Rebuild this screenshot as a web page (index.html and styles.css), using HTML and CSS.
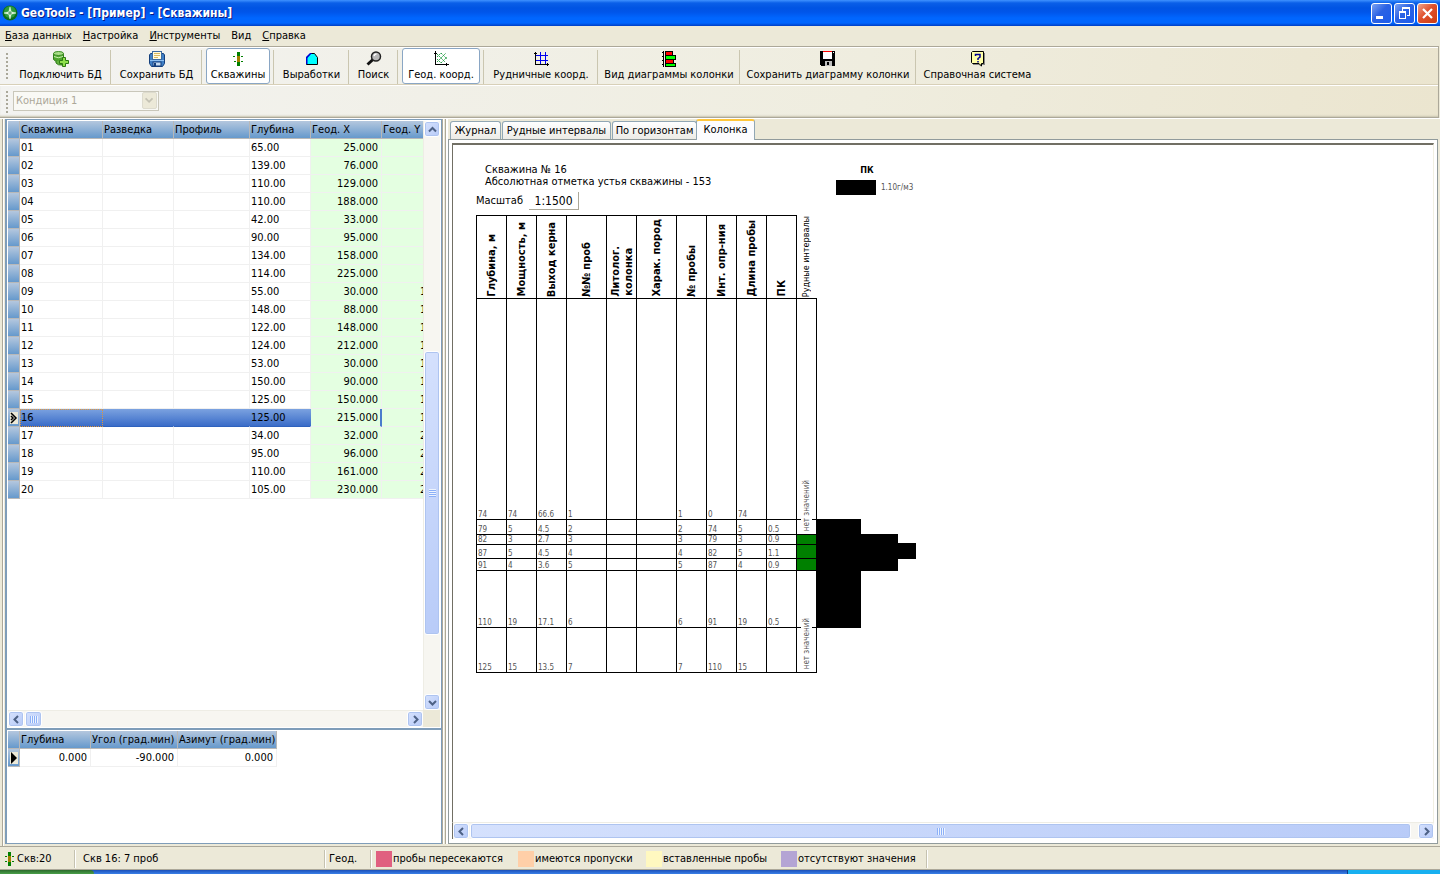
FILE: index.html
```
<!DOCTYPE html>
<html lang="ru">
<head>
    <meta charset="UTF-8">
    <meta name="viewport" content="width=device-width, initial-scale=1.0">
    <title>GeoTools - [Пример] - [Скважины]</title>
    <link rel="stylesheet" href="styles.css">
</head>
<body>
    <header class="titlebar">
        <svg class="logo" width="16" height="16" viewBox="0 0 16 16">
            <circle cx="8" cy="8" r="7.5" fill="#0b6b1c"/>
            <circle cx="8" cy="7" r="6" fill="#2c9a3c"/>
            <path d="M8 2L9.2 6.8L14 8L9.2 9.2L8 14L6.8 9.2L2 8L6.8 6.8Z" fill="#e8fbe8" stroke="#e8fbe8" stroke-width=".5"/>
            <path d="M8 6V10M6 8H10" stroke="#0b6b1c" stroke-width=".7"/>
        </svg>
        <h1>GeoTools - [Пример] - [Скважины]</h1>
        <div class="window-buttons">
            <button class="win-btn" aria-label="Свернуть">
                <svg width="19" height="19" viewBox="0 0 19 19" shape-rendering="crispEdges"><rect x="4" y="12" width="7" height="3" fill="#fff"/></svg>
            </button>
            <button class="win-btn" aria-label="Восстановить">
                <svg width="19" height="19" viewBox="0 0 19 19" shape-rendering="crispEdges" fill="none" stroke="#fff">
                    <path d="M4.5 8.5H10.5V14.500H4.5ZM4 7.5H11M7.5 7V4.5H14.5V11.5H12M7 3.5H15"/>
                </svg>
            </button>
            <button class="win-btn close" aria-label="Закрыть">
                <svg width="19" height="19" viewBox="0 0 19 19"><path d="M5 5L14 14M14 5L5 14" stroke="#fff" stroke-width="2.2"/></svg>
            </button>
        </div>
    </header>

    <nav class="menu">
        <button><u>Б</u>аза данных</button>
        <button><u>Н</u>астройка</button>
        <button><u>И</u>нструменты</button>
        <button>Вид</button>
        <button><u>С</u>правка</button>
    </nav>

    <div class="toolbars">
        <div class="toolbar">
            <div class="tool">
                <button>
                    <svg width="16" height="16" viewBox="0 0 16 16">
                        <path d="M.5 2.5V8.500Q2 10.500 5.500 10.500T10.500 8.500V2.500Z" fill="#4fa52e" stroke="#2f7d1a"/>
                        <path d="M1 5.500Q5 8 10 5.500" fill="none" stroke="#c8efae"/>
                        <ellipse cx="5.5" cy="2.5" rx="5" ry="2" fill="#a8dc88" stroke="#3a8d22"/>
                        <path d="M3 10V12Q5 14.500 9 14V9" fill="#62b33e" stroke="#2f7d1a"/>
                        <path d="M9.500 6.500H12.500V9.500H15.500V12.500H12.500V15.500H9.500V12.500H6.500V9.500H9.500Z" fill="#8fe04c" stroke="#2c7a12"/>
                    </svg>
                    <span>Подключить БД</span>
                </button>
            </div>
            <div class="tool">
                <button>
                    <svg width="16" height="16" viewBox="0 0 16 16">
                        <path d="M1.500 2.500H14.500L15.500 4V12.500L13.500 15.500H2.500L.5 12.500V4Z" fill="#3f7fc6" stroke="#143f7c"/>
                        <rect x="3.5" y=".5" width="9" height="8" fill="#fffbe0" stroke="#3c6aa0"/>
                        <path d="M5 2.500H11M5 4.500H11M5 6.500H9" stroke="#d9b860"/>
                        <path d="M1 9.500H15" stroke="#8fc0f0"/>
                        <rect x="4" y="11" width="8" height="4" fill="#c4daf0" stroke="#143f7c"/>
                        <rect x="5" y="12" width="2" height="3" fill="#143f7c"/>
                    </svg>
                    <span>Сохранить БД</span>
                </button>
            </div>
            <div class="tool">
                <button class="pressed">
                    <svg width="16" height="16" viewBox="0 0 16 16" shape-rendering="crispEdges">
                        <rect x="7" y="1" width="3" height="14" fill="#008000"/>
                        <rect x="7" y="5" width="3" height="6" fill="#a08000"/>
                        <path d="M3 5.500H5M11 5.500H13M4 10.500H6M11 10.500H13" stroke="#008000"/>
                    </svg>
                    <span>Скважины</span>
                </button>
            </div>
            <div class="tool">
                <button>
                    <svg width="16" height="16" viewBox="0 0 16 16">
                        <path d="M2.500 13.500V6.500L6.500 2.500H10.500L13.500 6.500V13.500Z" fill="#00ffff" stroke="#000"/>
                        <path d="M2 13V6L6 2H8L3.500 7V13Z" fill="#0000d0"/>
                    </svg>
                    <span>Выработки</span>
                </button>
            </div>
            <div class="tool">
                <button>
                    <svg width="16" height="16" viewBox="0 0 16 16">
                        <path d="M7 8.500L1.500 13.500" stroke="#111" stroke-width="3"/>
                        <circle cx="10" cy="5.5" r="4.5" fill="#b8b8b8" stroke="#222" stroke-width="1.5"/>
                        <path d="M8 5Q8.500 3 10.500 3" stroke="#fff" stroke-width="1.5" fill="none"/>
                    </svg>
                    <span>Поиск</span>
                </button>
            </div>
            <div class="tool">
                <button class="pressed">
                    <svg width="16" height="16" viewBox="0 0 16 16">
                        <path d="M2.500 0V13.500H16M1 2.500H4M13.500 12V15" stroke="#000" fill="none" shape-rendering="crispEdges"/>
                        <path d="M4 3L12 11M8 2L14 8M4 8L8 12M4 11L13 2M4 6L8 2M8 12L14 6" stroke="#2aa04a" stroke-dasharray="2 1"/>
                    </svg>
                    <span>Геод. коорд.</span>
                </button>
            </div>
            <div class="tool">
                <button>
                    <svg width="16" height="16" viewBox="0 0 16 16" shape-rendering="crispEdges">
                        <path d="M7.500 1V13M12.500 1V13M3 4.500H15M3 9.500H15" stroke="#0000f0"/>
                        <path d="M2.500 1V13.500H16M1 2.500H4M14.500 12V15" stroke="#000" fill="none"/>
                    </svg>
                    <span>Рудничные коорд.</span>
                </button>
            </div>
            <div class="tool">
                <button>
                    <svg width="16" height="16" viewBox="0 0 16 16" shape-rendering="crispEdges" stroke="#000">
                        <path d="M2.500 0V16M1 1.500H3M1 5.500H3M1 9.500H3M1 13.500H3"/>
                        <rect x="4.5" y=".5" width="7" height="4" fill="#f00"/>
                        <rect x="4.5" y="4.5" width="10" height="4" fill="#0f0"/>
                        <rect x="4.5" y="8.5" width="8" height="4" fill="#f00"/>
                        <rect x="4.5" y="12.5" width="10" height="3" fill="#0f0"/>
                    </svg>
                    <span>Вид диаграммы колонки</span>
                </button>
            </div>
            <div class="tool">
                <button>
                    <svg width="16" height="16" viewBox="0 0 16 16" shape-rendering="crispEdges">
                        <path d="M0 0H15V15H1L0 14Z" fill="#000"/>
                        <rect x="3" y="0" width="9" height="8" fill="#fff"/>
                        <rect x="3" y="0" width="9" height="1" fill="#f00"/>
                        <rect x="13" y="1" width="1" height="1" fill="#fff"/>
                        <rect x="5" y="10" width="7" height="5" fill="#c0c0c0"/>
                        <rect x="7" y="11" width="2" height="3" fill="#000"/>
                    </svg>
                    <span>Сохранить диаграмму колонки</span>
                </button>
            </div>
            <div class="tool">
                <button>
                    <svg width="16" height="16" viewBox="0 0 16 16">
                        <path d="M3 2H15V14H12V16L9 14H3Z" fill="#888"/>
                        <path d="M2.500 .5H13.500V12.500H11.500V15L9 12.500H2.500L1.500 11.500V1.500Z" fill="#ffffa8" stroke="#000"/>
                        <path d="M5.500 5V3.500H10V6L8 7.500V9M8 10V11.500" fill="none" stroke="#000090" stroke-width="1.5"/>
                    </svg>
                    <span>Справочная система</span>
                </button>
            </div>
        </div>
        <div class="toolbar second">
            <label class="combo">
                <select disabled aria-label="Кондиция">
                    <option>Кондиция 1</option>
                </select>
                <svg width="15" height="17" viewBox="0 0 15 17"><path d="M3 6L7 10L11 6" fill="none" stroke="#c4c2b4" stroke-width="2"/></svg>
            </label>
        </div>
    </div>

    <main class="workspace">
        <section class="left">
            <div class="wells">
                <div class="grid-view">
                    <table class="grid wells-grid">
                        <thead>
                            <tr><th class="mark"></th><th class="well">Скважина</th><th class="survey">Разведка</th><th class="profile">Профиль</th><th class="depth">Глубина</th><th class="geo">Геод. X</th><th class="geo">Геод. Y</th></tr>
                        </thead>
                        <tbody>
                            <tr><th></th><td>01</td><td></td><td></td><td>65.00</td><td>25.000</td><td></td></tr>
                            <tr><th></th><td>02</td><td></td><td></td><td>139.00</td><td>76.000</td><td></td></tr>
                            <tr><th></th><td>03</td><td></td><td></td><td>110.00</td><td>129.000</td><td></td></tr>
                            <tr><th></th><td>04</td><td></td><td></td><td>110.00</td><td>188.000</td><td></td></tr>
                            <tr><th></th><td>05</td><td></td><td></td><td>42.00</td><td>33.000</td><td></td></tr>
                            <tr><th></th><td>06</td><td></td><td></td><td>90.00</td><td>95.000</td><td></td></tr>
                            <tr><th></th><td>07</td><td></td><td></td><td>134.00</td><td>158.000</td><td></td></tr>
                            <tr><th></th><td>08</td><td></td><td></td><td>114.00</td><td>225.000</td><td></td></tr>
                            <tr><th></th><td>09</td><td></td><td></td><td>55.00</td><td>30.000</td><td>1</td></tr>
                            <tr><th></th><td>10</td><td></td><td></td><td>148.00</td><td>88.000</td><td>1</td></tr>
                            <tr><th></th><td>11</td><td></td><td></td><td>122.00</td><td>148.000</td><td>1</td></tr>
                            <tr><th></th><td>12</td><td></td><td></td><td>124.00</td><td>212.000</td><td>1</td></tr>
                            <tr><th></th><td>13</td><td></td><td></td><td>53.00</td><td>30.000</td><td>1</td></tr>
                            <tr><th></th><td>14</td><td></td><td></td><td>150.00</td><td>90.000</td><td>1</td></tr>
                            <tr><th></th><td>15</td><td></td><td></td><td>125.00</td><td>150.000</td><td>1</td></tr>
                            <tr class="selected"><th><svg width="8" height="12" viewBox="0 0 8 12"><rect width="8" height="12" fill="#ece9d8"/><path d="M1 1L6 6L1 11M1 4L3 6L1 8" fill="none" stroke="#000" stroke-width="1.5"/></svg></th><td>16</td><td></td><td></td><td>125.00</td><td>215.000</td><td>1</td></tr>
                            <tr><th></th><td>17</td><td></td><td></td><td>34.00</td><td>32.000</td><td>2</td></tr>
                            <tr><th></th><td>18</td><td></td><td></td><td>95.00</td><td>96.000</td><td>2</td></tr>
                            <tr><th></th><td>19</td><td></td><td></td><td>110.00</td><td>161.000</td><td>2</td></tr>
                            <tr><th></th><td>20</td><td></td><td></td><td>105.00</td><td>230.000</td><td>2</td></tr>
                        </tbody>
                    </table>
                </div>
                <div class="scroll vertical">
                    <button aria-label="Вверх"><svg width="9" height="9" viewBox="0 0 9 9"><path d="M1 6.500L4.500 3L8 6.500"/></svg></button>
                    <div class="track">
                        <span class="space-a"></span>
                        <div class="thumb"></div>
                        <span class="space-b"></span>
                    </div>
                    <button aria-label="Вниз"><svg width="9" height="9" viewBox="0 0 9 9"><path d="M1 3L4.500 6.500L8 3"/></svg></button>
                </div>
                <div class="scroll horizontal">
                    <button aria-label="Влево"><svg width="9" height="9" viewBox="0 0 9 9"><path d="M6 1L2.500 4.500L6 8"/></svg></button>
                    <div class="track"><div class="thumb short"></div></div>
                    <button aria-label="Вправо"><svg width="9" height="9" viewBox="0 0 9 9"><path d="M3 1L6.500 4.500L3 8"/></svg></button>
                </div>
            </div>
            <div class="angles">
                <table class="grid angles-grid">
                    <thead>
                        <tr><th class="mark"></th><th class="a-depth">Глубина</th><th class="a-angle">Угол (град.мин)</th><th class="a-azimuth">Азимут (град.мин)</th></tr>
                    </thead>
                    <tbody>
                        <tr><th><svg width="8" height="12" viewBox="0 0 8 12"><rect width="8" height="12" fill="#ece9d8"/><path d="M1 0L7 6L1 12Z"/></svg></th><td>0.000</td><td>-90.000</td><td>0.000</td></tr>
                    </tbody>
                </table>
            </div>
        </section>

        <div class="splitter"></div>

        <section class="right">
            <div class="tabs" role="tablist">
                <button role="tab" class="tab journal">Журнал</button>
                <button role="tab" class="tab ore">Рудные интервалы</button>
                <button role="tab" class="tab levels">По горизонтам</button>
                <button role="tab" class="tab active">Колонка</button>
            </div>
            <div class="page">
                <div class="sheet">
                    <div class="sheet-head">
                        <div class="caption">
                            <p>Скважина № 16</p>
                            <p>Абсолютная отметка устья скважины - 153</p>
                            <div class="scale">
                                <span>Масштаб</span>
                                <button>1:1500</button>
                            </div>
                        </div>
                        <div class="legend">
                            <b>ПК</b>
                            <div class="legend-row"><span class="bar"></span>1.10г/м3</div>
                        </div>
                    </div>
                    <div class="diagram">
                        <table class="core">
                            <thead>
                                <tr>
                                    <th class="w30"><span>Глубина, м</span></th>
                                    <th class="w30"><span>Мощность, м</span></th>
                                    <th class="w30"><span>Выход керна</span></th>
                                    <th class="w40"><span>№№ проб</span></th>
                                    <th class="w30"><span>Литолог.<br>колонка</span></th>
                                    <th class="w40"><span>Харак. пород</span></th>
                                    <th class="w30"><span>№ пробы</span></th>
                                    <th class="w30"><span>Инт. опр-ния</span></th>
                                    <th class="w30"><span>Длина пробы</span></th>
                                    <th class="w30"><span>ПК</span></th>
                                    <th class="w20 open"><span>Рудные интервалы</span></th>
                                </tr>
                            </thead>
                            <tbody>
                                <tr class="h221"><td>74</td><td>74</td><td>66.6</td><td>1</td><td></td><td></td><td>1</td><td>0</td><td>74</td><td></td><td><span class="none">нет значений</span></td></tr>
                                <tr class="h15"><td>79</td><td>5</td><td>4.5</td><td>2</td><td></td><td></td><td>2</td><td>74</td><td>5</td><td>0.5</td><td></td></tr>
                                <tr class="h10"><td>82</td><td>3</td><td>2.7</td><td>3</td><td></td><td></td><td>3</td><td>79</td><td>3</td><td>0.9</td><td class="ore-cell"></td></tr>
                                <tr class="h14"><td>87</td><td>5</td><td>4.5</td><td>4</td><td></td><td></td><td>4</td><td>82</td><td>5</td><td>1.1</td><td class="ore-cell"></td></tr>
                                <tr class="h12"><td>91</td><td>4</td><td>3.6</td><td>5</td><td></td><td></td><td>5</td><td>87</td><td>4</td><td>0.9</td><td class="ore-cell"></td></tr>
                                <tr class="h57"><td>110</td><td>19</td><td>17.1</td><td>6</td><td></td><td></td><td>6</td><td>91</td><td>19</td><td>0.5</td><td></td></tr>
                                <tr class="h45"><td>125</td><td>15</td><td>13.5</td><td>7</td><td></td><td></td><td>7</td><td>110</td><td>15</td><td></td><td><span class="none last">нет значений</span></td></tr>
                            </tbody>
                        </table>
                        <svg class="plot" width="99" height="109" viewBox="0 0 99 109"><path d="M0 0H44V15H81V24H99V40H81V52H44V109H0Z"/></svg>
                    </div>
                </div>
                <div class="scroll horizontal">
                    <button aria-label="Влево"><svg width="9" height="9" viewBox="0 0 9 9"><path d="M6 1L2.500 4.500L6 8"/></svg></button>
                    <div class="track"><div class="thumb wide"></div></div>
                    <button aria-label="Вправо"><svg width="9" height="9" viewBox="0 0 9 9"><path d="M3 1L6.500 4.500L3 8"/></svg></button>
                </div>
            </div>
        </section>
    </main>

    <footer class="status">
        <div class="cell count">
            <svg width="10" height="14" viewBox="0 0 10 14" shape-rendering="crispEdges">
                <rect x="3" width="3" height="14" fill="#008000"/>
                <rect x="3" y="4" width="3" height="6" fill="#a08000"/>
                <path d="M0 4.500H2M7 4.500H9M0 9.500H2M7 9.500H9" stroke="#008000"/>
            </svg>
            Скв:20
        </div>
        <div class="cell info">Скв 16: 7 проб</div>
        <div class="cell coords">Геод.</div>
        <ul class="cell keys">
            <li class="k-cross">пробы пересекаются</li>
            <li class="k-gap">имеются пропуски</li>
            <li class="k-insert">вставленные пробы</li>
            <li class="k-none">отсутствуют значения</li>
        </ul>
    </footer>
    <div class="taskbar"><span class="start"></span><span class="tray"></span></div>
</body>
</html>
```
FILE: styles.css
```
:root {
    --face: #ece9d8;
    --shadow: #aca899;
    --frame: #7f9db9;
    --grid-line: #f0f0f0;
    --green: #e4ffe1;
    --head: linear-gradient(#b4c7de, #6699cc);
}

* {
    box-sizing: border-box;
}

body {
    margin: 0;
    min-height: 100vh;
    display: flex;
    flex-direction: column;
    background: var(--face);
    color: #000;
    font: 11px/14px "DejaVu Sans Condensed", "DejaVu Sans", sans-serif;
}

button {
    font: inherit;
    color: inherit;
    background: none;
    border: 0;
    padding: 0;
    margin: 0;
}

p, h1, ul {
    margin: 0;
    padding: 0;
}

svg {
    display: block;
    flex: none;
}

/* title */
.titlebar {
    height: 26px;
    display: flex;
    align-items: center;
    padding: 0 2px;
    gap: 3px;
    background: linear-gradient(#3f92ff 0, #0a5fe8 3px, #0054e3 8px, #0055ea 12px, #0066ff 18px, #0066ff 23px, #003fc4 26px);
}

.titlebar h1 {
    flex: 1;
    color: #fff;
    font-size: 12px;
    line-height: 16px;
    font-weight: bold;
    text-shadow: 1px 1px 0 #0a1883;
}

.window-buttons {
    display: flex;
    gap: 2px;
}

.win-btn {
    width: 21px;
    height: 21px;
    border: 1px solid #fff;
    border-radius: 3px;
    background: linear-gradient(135deg, #7ba2f2, #2b62e4 45%, #1c5cec);
}

.win-btn.close {
    background: linear-gradient(135deg, #f0a48c, #e0502c 45%, #cc3c10);
}

/* menu */
.menu {
    height: 20px;
    display: flex;
    align-items: center;
    gap: 11px;
    padding: 0 5px;
}

/* toolbars */
.toolbars {
    border: 1px solid var(--shadow);
    border-left: 0;
    margin-right: 1px;
    background: linear-gradient(100deg, #f3f3f1, #efeddf 60%, #ebe5cf);
}

.toolbar {
    height: 38px;
    display: grid;
    grid-template-columns: 101px 91px 72px 75px 49px 86px 114px 142px 176px 122px;
    padding-left: 10px;
    border-top: 1px solid #fff;
    border-bottom: 1px solid #d8d0b8;
    position: relative;
}

.toolbar::before {
    content: '';
    position: absolute;
    left: 6px;
    top: 5px;
    bottom: 3px;
    width: 2px;
    background: repeating-linear-gradient(#aaa89a 0 2px, transparent 2px 4px);
}

.toolbar.second {
    height: 32px;
    display: flex;
    align-items: center;
    padding: 0 0 2px 13px;
    border-bottom: 0;
    box-shadow: inset 0 -2px 2px -1px #c8c4b0;
}

.tool {
    margin: 2px 0;
    padding: 0 3px 0 4px;
    border-right: 1px solid #cac6b0;
}

.tool:last-child {
    border-right: 0;
}

.tool button {
    width: 100%;
    height: 36px;
    margin-top: -2px;
    display: flex;
    flex-direction: column;
    align-items: center;
    gap: 1px;
    padding-top: 2px;
    border: 1px solid transparent;
    border-radius: 3px;
    white-space: nowrap;
}

.tool button.pressed {
    background: #fff;
    border-color: #8aa6c4;
}

.combo {
    display: flex;
    align-items: center;
    width: 146px;
    height: 20px;
    padding-right: 1px;
    border: 1px solid #c9c7ba;
    background: #f9f9f5;
}

.combo select {
    appearance: none;
    flex: 1;
    border: 0;
    padding: 0 2px;
    background: none;
    font: inherit;
    color: #aca899;
    opacity: 1;
}

.combo svg {
    background: #ece9d8;
    border: 1px solid #dddbce;
    border-radius: 2px;
}

/* main area */
.workspace {
    flex: 1;
    display: flex;
    border-top: 1px solid #fff;
    padding: 0 2px 2px 5px;
    box-shadow: inset 2px 0 0 var(--face), inset 3px 0 0 var(--shadow), inset 4px 0 0 #fff;
}

.left {
    width: 437px;
    display: flex;
    flex-direction: column;
    border: 1px solid var(--frame);
    border-width: 1px 1px 1px 2px;
    background: #fff;
}

.wells {
    flex: 1;
    display: grid;
    grid-template-columns: minmax(0, 1fr) 17px;
    grid-template-rows: 1fr 17px;
    padding: 1px 1px 1px 1px;
    background: linear-gradient(var(--face), var(--face)) content-box #fff;
    border-bottom: 2px solid var(--frame);
}

.grid-view {
    overflow: hidden;
    background: #fff;
}

.angles {
    height: 113px;
    padding: 1px 0 0 1px;
}

.grid {
    border-collapse: separate;
    border-spacing: 0;
    table-layout: fixed;
}

.wells-grid {
    width: 445px;
}

.angles-grid {
    width: 269px;
}

.grid th,
.grid td {
    height: 18px;
    padding: 0 2px 0 1px;
    font-weight: normal;
    text-align: left;
    white-space: nowrap;
    line-height: 14px;
    border-right: 1px solid var(--grid-line);
    border-bottom: 1px solid var(--grid-line);
}

.grid th {
    background: var(--head);
    border-color: #b8b8b8;
}

.grid th svg {
    margin-left: 1px;
}

.mark { width: 12px; }
.well { width: 83px; }
.survey { width: 71px; }
.profile { width: 76px; }
.depth { width: 61px; }
.geo { width: 71px; }
.a-depth { width: 71px; }
.a-angle { width: 87px; }
.a-azimuth { width: 99px; }

.wells-grid td:nth-child(n+6) {
    background: var(--green);
    padding-right: 3px;
    text-align: right;
}

.wells-grid td:last-child {
    padding-left: 38px;
    text-align: left;
}

.wells-grid .selected td:nth-child(-n+5) {
    background: linear-gradient(#7ba2e0, #3a6cc8);
    border-right-color: transparent;
    border-bottom-color: #2f62bd;
}

.wells-grid .selected td:nth-child(2) {
    outline: 1px dotted #e0963c;
    outline-offset: -1px;
}

.wells-grid .selected td:nth-child(6) {
    border-right: 2px solid #4a7ccc;
    padding-right: 2px;
}

.angles-grid td {
    text-align: right;
    padding-right: 3px;
}

/* scroll bars */
.scroll {
    display: flex;
    background: #f7f6f1;
}

.scroll.vertical {
    flex-direction: column;
    border-left: 1px solid #eeede5;
}

.scroll.horizontal {
    height: 17px;
    border-top: 1px solid #eeede5;
}

.scroll button {
    width: 16px;
    height: 16px;
    flex: none;
    display: flex;
    align-items: center;
    justify-content: center;
}

.scroll button,
.thumb {
    background: linear-gradient(135deg, #d5e1fd, #b8cbf8);
    border: 1px solid #fff;
    border-radius: 3px;
    box-shadow: inset 0 0 0 1px #aec4f0;
}

.scroll button path {
    fill: none;
    stroke: #4d6185;
    stroke-width: 2;
}

.track {
    flex: 1;
    display: flex;
}

.vertical .track {
    flex-direction: column;
}

.thumb {
    display: flex;
    align-items: center;
    justify-content: center;
}

.vertical .thumb {
    flex: 283;
}

.space-a { flex: 214; }
.space-b { flex: 59; }

.thumb::after {
    content: '';
    width: 8px;
    height: 7px;
    background: repeating-linear-gradient(90deg, #8cb0f8 0 1px, #eef4fe 1px 2px);
}

.vertical .thumb::after {
    width: 7px;
    height: 8px;
    background: repeating-linear-gradient(#eef4fe 0 1px, #8cb0f8 1px 2px);
}

.thumb.short {
    width: 17px;
    margin-left: 1px;
}

.thumb.wide {
    flex: 1;
    margin: 0 7px 0 1px;
}

.splitter {
    width: 6px;
    background: linear-gradient(90deg, var(--shadow) 1px, #fff 1px 2px, var(--face) 2px 3px, var(--shadow) 3px 4px, #fff 4px);
}

/* tabs */
.right {
    flex: 1;
    display: flex;
    flex-direction: column;
    min-width: 0;
}

.tabs {
    height: 20px;
    display: flex;
    align-items: flex-end;
    gap: 1px;
    padding-left: 2px;
}

.tab {
    height: 18px;
    border: 1px solid #91a7b4;
    border-bottom: 0;
    border-radius: 3px 3px 0 0;
    background: linear-gradient(#fff, #ecebe6);
    white-space: nowrap;
}

.journal { width: 51px; }
.ore { width: 109px; }
.levels { width: 85px; }

.tab.active {
    width: 59px;
    height: 21px;
    margin: 0 0 -1px -2px;
    padding-bottom: 2px;
    border-top: 2px solid #ffc73c;
    background: #fcfcfe;
    position: relative;
}

.page {
    flex: 1;
    display: flex;
    flex-direction: column;
    padding: 3px 3px 4px;
    border: 1px solid #919b9c;
    background: #fff;
}

.sheet {
    flex: 1;
    padding: 19px 23px;
    border: 1px solid #716f64;
    border-top-width: 2px;
    border-right-color: #f1efe2;
    border-bottom: 0;
}

.page > .scroll {
    border-left: 1px solid #716f64;
}

.sheet-head {
    display: flex;
}

.caption {
    width: 360px;
}

.caption p {
    padding-left: 9px;
    line-height: 12px;
}

.scale {
    display: flex;
    align-items: center;
    gap: 6px;
    height: 18px;
    margin: 4px 0 5px;
}

.scale button {
    width: 50px;
    height: 18px;
    border: 1px solid var(--shadow);
    border-width: 0 1px 1px 0;
    font-size: 12px;
}

.legend {
    font-size: 8px;
    color: #555;
}

.legend b {
    display: block;
    width: 62px;
    color: #000;
    line-height: 12px;
    font-size: 9px;
    text-align: center;
}

.legend-row {
    display: flex;
    align-items: center;
    gap: 5px;
    margin-top: 4px;
}

.bar {
    width: 40px;
    height: 15px;
    background: #000;
}

/* core diagram */
.diagram {
    display: flex;
    align-items: flex-start;
}

.core {
    width: 341px;
    border-collapse: collapse;
    table-layout: fixed;
}

.core th,
.core td {
    padding: 0;
    border: 1px solid #000;
}

.core th {
    height: 82px;
    vertical-align: bottom;
}

.core th span {
    display: block;
    margin: 0 auto 1px;
    writing-mode: vertical-rl;
    text-orientation: sideways;
    transform: rotate(180deg);
    line-height: 13px;
    white-space: nowrap;
}

.core th.open {
    border-top: 0;
    border-right: 0;
    font-size: 9px;
    font-weight: normal;
}

.w20 { width: 20px; }
.w30 { width: 30px; }
.w40 { width: 40px; }

.core td {
    padding-left: 1px;
    font-size: 8px;
    line-height: 9px;
    color: #555;
    vertical-align: bottom;
    position: relative;
}

.h221 { height: 221px; }
.h15 { height: 15px; }
.h10 { height: 10px; }
.h14 { height: 14px; }
.h12 { height: 12px; }
.h57 { height: 57px; }
.h45 { height: 45px; }

.core .ore-cell {
    background: #008000;
}

/* vertical note lying over the row lines */
.none {
    position: absolute;
    z-index: 1;
    left: 4px;
    bottom: -13px;
    width: 11px;
    line-height: 11px;
    writing-mode: vertical-rl;
    transform: rotate(180deg);
    white-space: nowrap;
    background: #fff;
}

.none.last {
    bottom: 2px;
}

.plot {
    margin-top: 304px;
}

/* status bar */
.status {
    height: 24px;
    display: flex;
    align-items: center;
    padding: 1px 0 0 5px;
    border-top: 1px solid var(--shadow);
    border-bottom: 1px solid var(--shadow);
}

.cell {
    height: 18px;
    display: flex;
    align-items: center;
    gap: 2px;
    border-right: 1px solid #fff;
    box-shadow: inset -1px 0 0 #c5c2b0;
}

.count { width: 71px; }
.info { width: 250px; padding-left: 7px; }
.coords { width: 46px; padding-left: 3px; }

.keys {
    list-style: none;
    gap: 0;
    padding-left: 4px;
}

.keys li {
    display: flex;
    align-items: center;
    gap: 1px;
    white-space: nowrap;
}

.keys li::before {
    content: '';
    width: 16px;
    height: 16px;
    background: var(--key);
}

.k-cross { --key: #e06080; width: 142px; }
.k-gap { --key: #ffcfa8; width: 128px; }
.k-insert { --key: #fff8c0; width: 135px; }
.k-none { --key: #b4a4d4; width: 146px; }

.taskbar {
    height: 4px;
    display: flex;
    justify-content: space-between;
    background: linear-gradient(#1c4fb8, #3a80e8);
}

.start {
    width: 94px;
    border-radius: 0 4px 0 0;
    background: linear-gradient(#2c6a2c, #4aa04a);
}

.tray {
    width: 93px;
    border-left: 1px solid #103c80;
    background: #18b0f0;
}
```
